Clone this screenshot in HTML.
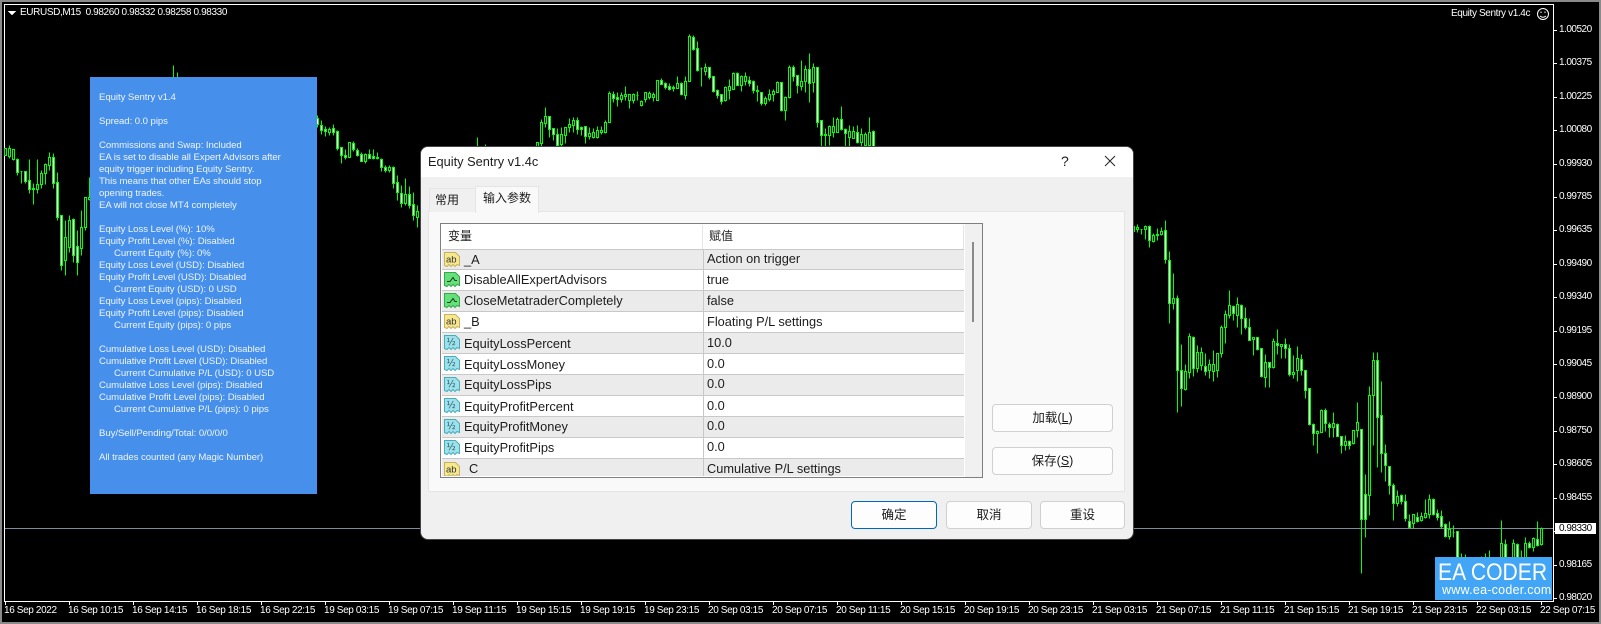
<!DOCTYPE html>
<html><head><meta charset="utf-8"><title>Equity Sentry</title>
<style>
html,body{margin:0;padding:0;background:#000}
#r{position:relative;width:1601px;height:624px;overflow:hidden;background:#000;font-family:"Liberation Sans","Noto Sans CJK SC",sans-serif}
#r div,#r svg{position:absolute}
.m{color:#fff;font-size:10px;line-height:12px;white-space:pre;letter-spacing:-.37px}
.p{color:#fff;font-size:10px;line-height:12px;white-space:pre;letter-spacing:-.5px;left:1559px}
.x{color:#fff;font-size:10px;line-height:12px;white-space:pre;letter-spacing:-.37px;top:605px}
.l{left:99px;color:#eef4fd;font-size:9.6px;line-height:12px;white-space:pre;letter-spacing:-.06px}
.u{color:#1c1c1c;font-size:12.8px;line-height:16px;white-space:pre}
.row{left:442px;width:522px;height:20px;border-bottom:1px solid #c8c8c8;overflow:hidden}
.g{background:#ebebeb}.wh{background:#fff}
.btn{background:#fdfdfd;border:1px solid #d0d0d0;border-radius:4px;box-sizing:border-box;text-align:center;color:#1c1c1c;font-size:12.5px;line-height:26px}
.n{left:22px;top:2px}.v{left:265px;top:2px}
.i{left:2px;top:2px}
</style></head><body><div id="r">

<div style="left:0;top:0;width:1601px;height:2px;background:#8a8a8a"></div>
<div style="left:0;top:0;width:2px;height:624px;background:#8a8a8a"></div>
<div style="left:0;top:622px;width:1601px;height:2px;background:#8a8a8a"></div>
<div style="left:1599px;top:0;width:2px;height:624px;background:#8a8a8a"></div>
<div style="left:4px;top:4px;width:1550px;height:1px;background:#fff"></div>
<div style="left:4px;top:4px;width:1px;height:598px;background:#fff"></div>
<div style="left:4px;top:601px;width:1550px;height:1px;background:#fff"></div>
<div style="left:1553px;top:4px;width:1px;height:598px;background:#fff"></div>
<div style="left:5px;top:528px;width:1548px;height:1px;background:#7f8c9c"></div>

<svg width="1601" height="624" style="left:0;top:0">
<g transform="translate(.5 .5)" fill="none" stroke="#00ff00" stroke-width="1" shape-rendering="crispEdges">
<path d="M5 148V155M9 145V158M13 149V160M17 158V175M21 171V183M25 171V183M29 159V193M33 183V204M37 159V193M41 170V188M45 163V184M49 152V170M53 153V188M57 172V220M61 215V270M65 220V275M69 215V252M73 218V262M77 230V275M81 210V255M85 197V230M89 177V200M173 65V77M177 72V77
M317 115V127M321 120V134M325 126V136M329 127V135M333 124V135M337 130V150M341 147V163M345 149V159M349 142V157M353 141V151M357 148V156M361 152V161M365 153V163M369 149V158M373 149V159M377 152V159M381 158V171M385 165V172M389 165V172M393 166V188M397 175V200M401 185V207M405 178V205M409 186V208M413 192V220M417 205V227
M477 137V148M481 146V148M485 144V148M537 142V148M541 119V148M545 107V127M549 116V137M553 128V140M557 128V148M561 127V146M565 127V143M569 118V132M573 117V132M577 117V134M581 126V135M585 126V143M589 127V139M593 128V138M597 126V138M601 126V134M605 120V133M609 91V122M613 91V102M617 92V106M621 92V102M625 86V100M629 94V108M633 93V103M637 91V100M641 100V106M645 92V102M649 91V99M653 92V101M657 80V100M661 78V84M665 82V89M669 83V90M673 85V91M677 76V88M681 82V95M685 76V99M689 34V81M693 35V50M697 41V71M701 67V86M705 63V75M709 67V79M713 76V92M717 89V98M721 94V104M725 86V101M729 79V99M733 72V89M737 72V85M741 75V91M745 72V85M749 76V86M753 80V93M757 85V101M761 92V105M765 96V105M769 89V101M773 89V101M777 81V92M781 82V111M785 96V120M789 65V98M793 65V81M797 75V93M801 60V90M805 65V92M809 53V102M813 63V92M817 67V127M821 120V148M825 128V148M829 125V145M833 117V137M837 117V132M841 106V130M845 128V148M849 125V148M853 126V137M857 125V143M861 128V148M865 132V148M869 117V148M873 130V148
M1133 224V232M1137 224V232M1141 229V234M1145 225V239M1149 225V247M1153 233V242M1157 228V240M1161 227V235M1165 220V263M1169 251V323M1173 273V309M1177 295V412M1181 344V406M1185 364V390M1189 333V378M1193 336V376M1197 345V372M1201 347V370M1205 353V375M1209 359V378M1213 350V381M1217 356V377M1221 325V357M1225 310V343M1229 290V318M1233 305V320M1237 297V327M1241 304V334M1245 307V329M1249 318V340M1253 337V355M1257 337V350M1261 348V377M1265 354V387M1269 362V387M1273 338V368M1277 329V354M1281 344V358M1285 338V358M1289 344V376M1293 355V378M1297 346V381M1301 354V375M1305 370V398M1309 388V425M1313 423V445M1317 430V453M1321 409V432M1325 408V431M1329 422V437M1333 412V437M1337 423V436M1341 436V453M1345 435V450M1349 440V449M1353 430V444M1357 402V437M1361 429V573M1365 474V537M1369 386V515M1373 352V445M1377 352V467M1381 381V472M1385 444V481M1389 466V494M1393 483V520M1397 490V506M1401 494V504M1405 494V521M1409 514V528M1413 514V528M1417 512V522M1421 512V521M1425 499V518M1429 494V518M1433 498V515M1437 509V520M1441 510V528M1445 523V537M1449 521V539M1453 525V537M1457 531V570M1461 553V560M1465 554V560M1481 556V560M1485 553V560M1489 550V560M1501 520V560M1505 539V560M1513 539V560M1517 543V560M1521 550V560M1525 537V560M1529 541V548M1533 537V551M1537 521V546M1541 527V545"/>
<path fill="#000" d="M4 148h2V155h-2zM8 148h2V156h-2zM12 149h2V159h-2zM20 171h2V171h-2zM32 188h2V189h-2zM36 184h2V189h-2zM40 173h2V184h-2zM44 164h2V173h-2zM48 157h2V165h-2zM64 237h2V260h-2zM68 220h2V247h-2zM80 227h2V248h-2zM84 197h2V227h-2zM88 197h2V199h-2z
M328 129h2V132h-2zM348 142h2V157h-2zM364 154h2V161h-2zM376 157h2V158h-2zM388 167h2V170h-2zM404 194h2V203h-2zM416 211h2V217h-2z
M536 142h2V150h-2zM540 122h2V143h-2zM544 116h2V123h-2zM560 134h2V144h-2zM564 127h2V135h-2zM568 124h2V127h-2zM572 120h2V125h-2zM588 133h2V136h-2zM592 132h2V137h-2zM596 130h2V137h-2zM600 130h2V132h-2zM604 122h2V132h-2zM608 93h2V122h-2zM620 95h2V99h-2zM624 94h2V96h-2zM628 94h2V100h-2zM632 94h2V100h-2zM636 95h2V95h-2zM640 101h2V105h-2zM644 92h2V99h-2zM648 93h2V97h-2zM652 94h2V97h-2zM656 80h2V100h-2zM676 83h2V88h-2zM684 81h2V95h-2zM688 36h2V81h-2zM700 68h2V68h-2zM704 67h2V71h-2zM724 87h2V100h-2zM728 86h2V90h-2zM732 73h2V89h-2zM740 76h2V85h-2zM744 76h2V81h-2zM756 90h2V91h-2zM764 98h2V103h-2zM768 94h2V99h-2zM772 91h2V94h-2zM776 82h2V92h-2zM784 97h2V110h-2zM788 67h2V97h-2zM800 81h2V86h-2zM804 69h2V81h-2zM812 67h2V82h-2zM824 134h2V135h-2zM828 126h2V135h-2zM832 126h2V132h-2zM836 119h2V132h-2zM848 131h2V137h-2zM852 131h2V138h-2zM860 134h2V142h-2zM864 134h2V145h-2zM868 132h2V145h-2z
M1132 226h2V231h-2zM1136 227h2V229h-2zM1140 229h2V229h-2zM1144 226h2V229h-2zM1152 235h2V241h-2zM1156 234h2V235h-2zM1160 231h2V234h-2zM1172 298h2V303h-2zM1184 371h2V389h-2zM1188 336h2V372h-2zM1196 352h2V368h-2zM1200 352h2V365h-2zM1208 364h2V370h-2zM1212 364h2V371h-2zM1216 353h2V370h-2zM1220 327h2V353h-2zM1224 314h2V327h-2zM1228 305h2V315h-2zM1236 304h2V315h-2zM1252 337h2V339h-2zM1264 362h2V377h-2zM1272 341h2V367h-2zM1280 344h2V346h-2zM1292 372h2V374h-2zM1296 358h2V370h-2zM1316 431h2V433h-2zM1320 410h2V432h-2zM1332 423h2V427h-2zM1344 441h2V445h-2zM1352 430h2V443h-2zM1356 422h2V430h-2zM1368 395h2V495h-2zM1372 360h2V395h-2zM1396 496h2V503h-2zM1412 514h2V523h-2zM1420 516h2V520h-2zM1424 513h2V517h-2zM1428 499h2V514h-2zM1448 529h2V536h-2zM1452 532h2V532h-2zM1500 543h2V560h-2zM1512 543h2V560h-2zM1524 543h2V560h-2zM1532 538h2V547h-2zM1540 528h2V544h-2z"/>
<path fill="#fff" d="M16 159h2V172h-2zM24 171h2V181h-2zM28 180h2V189h-2zM52 157h2V183h-2zM56 182h2V217h-2zM60 215h2V265h-2zM72 219h2V255h-2zM76 246h2V262h-2z
M316 118h2V124h-2zM320 125h2V130h-2zM324 129h2V131h-2zM332 128h2V132h-2zM336 131h2V148h-2zM340 147h2V155h-2zM344 155h2V157h-2zM352 143h2V149h-2zM356 150h2V155h-2zM360 154h2V161h-2zM368 154h2V158h-2zM372 156h2V158h-2zM380 159h2V167h-2zM384 167h2V170h-2zM392 167h2V183h-2zM396 182h2V192h-2zM400 193h2V203h-2zM408 194h2V205h-2zM412 204h2V215h-2z
M548 116h2V129h-2zM552 128h2V134h-2zM556 134h2V145h-2zM576 120h2V129h-2zM580 127h2V129h-2zM584 126h2V136h-2zM612 94h2V98h-2zM616 97h2V99h-2zM660 80h2V84h-2zM664 83h2V87h-2zM668 86h2V89h-2zM672 87h2V88h-2zM680 83h2V94h-2zM692 37h2V49h-2zM696 48h2V70h-2zM708 67h2V77h-2zM712 76h2V91h-2zM716 90h2V95h-2zM720 94h2V101h-2zM736 73h2V85h-2zM748 80h2V83h-2zM752 81h2V90h-2zM760 92h2V103h-2zM780 82h2V110h-2zM792 67h2V76h-2zM796 75h2V85h-2zM808 69h2V83h-2zM816 67h2V122h-2zM820 120h2V135h-2zM840 119h2V129h-2zM844 129h2V133h-2zM856 132h2V142h-2zM872 131h2V148h-2z
M1148 226h2V240h-2zM1164 230h2V259h-2zM1168 260h2V303h-2zM1176 298h2V370h-2zM1180 370h2V388h-2zM1192 337h2V368h-2zM1204 366h2V371h-2zM1232 306h2V313h-2zM1240 305h2V318h-2zM1244 318h2V327h-2zM1248 327h2V340h-2zM1256 337h2V349h-2zM1260 348h2V376h-2zM1268 362h2V367h-2zM1276 343h2V345h-2zM1284 344h2V348h-2zM1288 348h2V374h-2zM1300 359h2V370h-2zM1304 370h2V390h-2zM1308 388h2V424h-2zM1312 424h2V433h-2zM1324 410h2V423h-2zM1328 424h2V427h-2zM1336 424h2V436h-2zM1340 436h2V445h-2zM1348 441h2V445h-2zM1360 429h2V519h-2zM1364 494h2V519h-2zM1376 360h2V417h-2zM1380 415h2V453h-2zM1384 453h2V465h-2zM1388 466h2V485h-2zM1392 485h2V503h-2zM1400 495h2V501h-2zM1404 501h2V518h-2zM1408 521h2V527h-2zM1416 517h2V521h-2zM1432 499h2V514h-2zM1436 513h2V517h-2zM1440 516h2V526h-2zM1444 524h2V536h-2zM1456 531h2V570h-2zM1504 544h2V560h-2zM1516 544h2V560h-2zM1528 543h2V547h-2zM1536 539h2V545h-2z"/>
</g>
<g fill="#fff" shape-rendering="crispEdges">
<path d="M8 11h8l-4 4.5z"/>
<path d="M1554 30h3v1h-3zM1554 63h3v1h-3zM1554 97h3v1h-3zM1554 130h3v1h-3zM1554 164h3v1h-3zM1554 197h3v1h-3zM1554 230h3v1h-3zM1554 264h3v1h-3zM1554 297h3v1h-3zM1554 331h3v1h-3zM1554 364h3v1h-3zM1554 397h3v1h-3zM1554 431h3v1h-3zM1554 464h3v1h-3zM1554 498h3v1h-3zM1554 531h3v1h-3zM1554 565h3v1h-3zM1554 598h3v1h-3z"/>
<path d="M5 602h1v3h-1zM69 602h1v3h-1zM133 602h1v3h-1zM197 602h1v3h-1zM261 602h1v3h-1zM325 602h1v3h-1zM389 602h1v3h-1zM453 602h1v3h-1zM517 602h1v3h-1zM581 602h1v3h-1zM645 602h1v3h-1zM709 602h1v3h-1zM773 602h1v3h-1zM837 602h1v3h-1zM901 602h1v3h-1zM965 602h1v3h-1zM1029 602h1v3h-1zM1093 602h1v3h-1zM1157 602h1v3h-1zM1221 602h1v3h-1zM1285 602h1v3h-1zM1349 602h1v3h-1zM1413 602h1v3h-1zM1477 602h1v3h-1zM1541 602h1v3h-1z"/>
</g>
<g fill="none" stroke="#fff" stroke-width="1">
<circle cx="1543" cy="14" r="5.5"/>
<path d="M1540 16q3 2.5 6 0"/>
<path d="M1541 11.500v1.500M1545 11.500v1.500"/>
</g>
</svg>

<div class="m" style="left:20px;top:7px">EURUSD,M15  0.98260 0.98332 0.98258 0.98330</div>
<div class="m" style="left:1451px;top:8px">Equity Sentry v1.4c</div>

<div class="p" style="top:24px">1.00520</div><div class="p" style="top:57px">1.00375</div><div class="p" style="top:91px">1.00225</div><div class="p" style="top:124px">1.00080</div><div class="p" style="top:158px">0.99930</div><div class="p" style="top:191px">0.99785</div><div class="p" style="top:224px">0.99635</div><div class="p" style="top:258px">0.99490</div><div class="p" style="top:291px">0.99340</div><div class="p" style="top:325px">0.99195</div><div class="p" style="top:358px">0.99045</div><div class="p" style="top:391px">0.98900</div><div class="p" style="top:425px">0.98750</div><div class="p" style="top:458px">0.98605</div><div class="p" style="top:492px">0.98455</div><div class="p" style="top:525px">0.98310</div><div class="p" style="top:559px">0.98165</div><div class="p" style="top:592px">0.98020</div>
<div style="left:1555px;top:523px;width:41px;height:11px;background:#fff"></div>
<div class="p" style="top:523px;color:#000">0.98330</div>

<div class="x" style="left:4px">16 Sep 2022</div><div class="x" style="left:68px">16 Sep 10:15</div><div class="x" style="left:132px">16 Sep 14:15</div><div class="x" style="left:196px">16 Sep 18:15</div><div class="x" style="left:260px">16 Sep 22:15</div><div class="x" style="left:324px">19 Sep 03:15</div><div class="x" style="left:388px">19 Sep 07:15</div><div class="x" style="left:452px">19 Sep 11:15</div><div class="x" style="left:516px">19 Sep 15:15</div><div class="x" style="left:580px">19 Sep 19:15</div><div class="x" style="left:644px">19 Sep 23:15</div><div class="x" style="left:708px">20 Sep 03:15</div><div class="x" style="left:772px">20 Sep 07:15</div><div class="x" style="left:836px">20 Sep 11:15</div><div class="x" style="left:900px">20 Sep 15:15</div><div class="x" style="left:964px">20 Sep 19:15</div><div class="x" style="left:1028px">20 Sep 23:15</div><div class="x" style="left:1092px">21 Sep 03:15</div><div class="x" style="left:1156px">21 Sep 07:15</div><div class="x" style="left:1220px">21 Sep 11:15</div><div class="x" style="left:1284px">21 Sep 15:15</div><div class="x" style="left:1348px">21 Sep 19:15</div><div class="x" style="left:1412px">21 Sep 23:15</div><div class="x" style="left:1476px">22 Sep 03:15</div><div class="x" style="left:1540px">22 Sep 07:15</div>

<div style="left:90px;top:77px;width:227px;height:417px;background:#4690ec"></div>
<div class="l" style="top:92px">Equity Sentry v1.4</div>
<div class="l" style="top:116px">Spread: 0.0 pips</div>
<div class="l" style="top:140px">Commissions and Swap: Included</div>
<div class="l" style="top:152px">EA is set to disable all Expert Advisors after</div>
<div class="l" style="top:164px">equity trigger including Equity Sentry.</div>
<div class="l" style="top:176px">This means that other EAs should stop</div>
<div class="l" style="top:188px">opening trades.</div>
<div class="l" style="top:200px">EA will not close MT4 completely</div>
<div class="l" style="top:224px">Equity Loss Level (%): 10%</div>
<div class="l" style="top:236px">Equity Profit Level (%): Disabled</div>
<div class="l" style="top:248px;left:114px">Current Equity (%): 0%</div>
<div class="l" style="top:260px">Equity Loss Level (USD): Disabled</div>
<div class="l" style="top:272px">Equity Profit Level (USD): Disabled</div>
<div class="l" style="top:284px;left:114px">Current Equity (USD): 0 USD</div>
<div class="l" style="top:296px">Equity Loss Level (pips): Disabled</div>
<div class="l" style="top:308px">Equity Profit Level (pips): Disabled</div>
<div class="l" style="top:320px;left:114px">Current Equity (pips): 0 pips</div>
<div class="l" style="top:344px">Cumulative Loss Level (USD): Disabled</div>
<div class="l" style="top:356px">Cumulative Profit Level (USD): Disabled</div>
<div class="l" style="top:368px;left:114px">Current Cumulative P/L (USD): 0 USD</div>
<div class="l" style="top:380px">Cumulative Loss Level (pips): Disabled</div>
<div class="l" style="top:392px">Cumulative Profit Level (pips): Disabled</div>
<div class="l" style="top:404px;left:114px">Current Cumulative P/L (pips): 0 pips</div>
<div class="l" style="top:428px">Buy/Sell/Pending/Total: 0/0/0/0</div>
<div class="l" style="top:452px">All trades counted (any Magic Number)</div>

<div style="left:1435px;top:557px;width:117px;height:43px;background:#42a5f5"></div>
<div style="left:1438px;top:560px;color:#fff;font-size:24px;line-height:26px;white-space:pre;transform:scaleX(.88);transform-origin:left top">EA CODER</div>
<div style="left:1442px;top:583px;color:#fff;font-size:12.5px;line-height:14px;white-space:pre;letter-spacing:.25px">www.ea-coder.com</div>

<div style="left:420px;top:146px;width:714px;height:394px;background:#f0f0f0;border-radius:8px;box-sizing:border-box;border:1px solid #444;overflow:hidden"></div>
<div style="left:421px;top:147px;width:712px;height:30px;background:#fff;border-radius:7px 7px 0 0"></div>
<div class="u" style="left:428px;top:154px">Equity Sentry v1.4c</div>
<div class="u" style="left:1061px;top:153px;font-size:14px">?</div>
<svg width="12" height="12" style="left:1104px;top:155px"><path d="M1 1L11 11M11 1L1 11" stroke="#222" stroke-width="1" fill="none"/></svg>

<div style="left:428px;top:211px;width:697px;height:281px;background:#f9f9f9;border:1px solid #e5e5e5;box-sizing:border-box"></div>
<div style="left:429px;top:188px;width:47px;height:24px;background:#f0f0f0;border:1px solid #e5e5e5;border-bottom:none;box-sizing:border-box"></div>
<div class="u" style="left:435px;top:192px;font-size:12px">常用</div>
<div style="left:475px;top:186px;width:64px;height:27px;background:#f9f9f9;border:1px solid #e5e5e5;border-bottom:none;box-sizing:border-box"></div>
<div class="u" style="left:483px;top:190px;font-size:12px">输入参数</div>

<div style="left:440px;top:223px;width:543px;height:255px;background:#fff;border:1px solid #7f7f7f;box-sizing:border-box"></div>
<div style="left:965px;top:224px;width:17px;height:253px;background:#f0f0f0"></div>
<div style="left:972px;top:242px;width:2px;height:80px;background:#8a8a8a"></div>
<div class="u" style="left:448px;top:228px;font-size:12px">变量</div>
<div class="u" style="left:709px;top:228px;font-size:12px">赋值</div>
<div style="left:702px;top:225px;width:1px;height:24px;background:#e5e5e5"></div>
<div style="left:963px;top:225px;width:1px;height:24px;background:#e5e5e5"></div>
<div style="left:442px;top:249px;width:522px;height:1px;background:#c8c8c8"></div>

<div class="row g" style="top:250px;height:19px"><svg class="i" width="16" height="16"><path d="M.5 .5H11.5L15.5 4.5V13.5L13 12.5L11 14.5L9 12.5L7 14.5L5 12.5L3 14.5L.5 13.5Z" fill="#f5e88f" stroke="#c9b060"/><text x="2" y="10.500" font-size="9.500" fill="#333" font-family="Liberation Sans">ab</text></svg><div class="u n">_A</div><div class="u v" style="top:1px">Action on trigger</div></div>
<div class="row wh" style="top:270px"><svg class="i" width="16" height="16"><path d="M.5 .5H11.500L15.500 4.500V13.500L13 12.500L11 14.500L9 12.500L7 14.500L5 12.500L3 14.500L.5 13.500Z" fill="#66e07a" stroke="#35a84c"/><path d="M3 9.500H6L9 5.500L11 8.500H13" fill="none" stroke="#123f1c"/></svg><div class="u n">DisableAllExpertAdvisors</div><div class="u v">true</div></div>
<div class="row g" style="top:291px"><svg class="i" width="16" height="16"><path d="M.5 .5H11.500L15.500 4.500V13.500L13 12.500L11 14.500L9 12.500L7 14.500L5 12.500L3 14.500L.5 13.500Z" fill="#66e07a" stroke="#35a84c"/><path d="M3 9.500H6L9 5.500L11 8.500H13" fill="none" stroke="#123f1c"/></svg><div class="u n">CloseMetatraderCompletely</div><div class="u v">false</div></div>
<div class="row wh" style="top:312px"><svg class="i" width="16" height="16"><path d="M.5 .5H11.500L15.500 4.500V13.500L13 12.500L11 14.500L9 12.500L7 14.500L5 12.500L3 14.500L.5 13.500Z" fill="#f5e88f" stroke="#c9b060"/><text x="2" y="10.500" font-size="9.500" fill="#333" font-family="Liberation Sans">ab</text></svg><div class="u n">_B</div><div class="u v">Floating P/L settings</div></div>
<div class="row g" style="top:333px"><svg class="i" width="16" height="16"><path d="M.5 .5H11.500L15.500 4.500V13.500L13 12.500L11 14.500L9 12.500L7 14.500L5 12.500L3 14.500L.5 13.500Z" fill="#a0e0ea" stroke="#45aebd"/><text x="2.500" y="10" font-size="9.500" fill="#1f5f6c" font-family="DejaVu Sans">½</text></svg><div class="u n" style="top:3px">EquityLossPercent</div><div class="u v">10.0</div></div>
<div class="row wh" style="top:354px"><svg class="i" width="16" height="16"><path d="M.5 .5H11.500L15.500 4.500V13.500L13 12.500L11 14.500L9 12.500L7 14.500L5 12.500L3 14.500L.5 13.500Z" fill="#a0e0ea" stroke="#45aebd"/><text x="2.500" y="10" font-size="9.500" fill="#1f5f6c" font-family="DejaVu Sans">½</text></svg><div class="u n" style="top:3px">EquityLossMoney</div><div class="u v">0.0</div></div>
<div class="row g" style="top:375px"><svg class="i" width="16" height="16"><path d="M.5 .5H11.500L15.500 4.500V13.500L13 12.500L11 14.500L9 12.500L7 14.500L5 12.500L3 14.500L.5 13.500Z" fill="#a0e0ea" stroke="#45aebd"/><text x="2.500" y="10" font-size="9.500" fill="#1f5f6c" font-family="DejaVu Sans">½</text></svg><div class="u n">EquityLossPips</div><div class="u v" style="top:1px">0.0</div></div>
<div class="row wh" style="top:396px"><svg class="i" width="16" height="16"><path d="M.5 .5H11.500L15.500 4.500V13.500L13 12.500L11 14.500L9 12.500L7 14.500L5 12.500L3 14.500L.5 13.500Z" fill="#a0e0ea" stroke="#45aebd"/><text x="2.500" y="10" font-size="9.500" fill="#1f5f6c" font-family="DejaVu Sans">½</text></svg><div class="u n" style="top:3px">EquityProfitPercent</div><div class="u v">0.0</div></div>
<div class="row g" style="top:417px"><svg class="i" width="16" height="16"><path d="M.5 .5H11.500L15.500 4.500V13.500L13 12.500L11 14.500L9 12.500L7 14.500L5 12.500L3 14.500L.5 13.500Z" fill="#a0e0ea" stroke="#45aebd"/><text x="2.500" y="10" font-size="9.500" fill="#1f5f6c" font-family="DejaVu Sans">½</text></svg><div class="u n">EquityProfitMoney</div><div class="u v" style="top:1px">0.0</div></div>
<div class="row wh" style="top:438px"><svg class="i" width="16" height="16"><path d="M.5 .5H11.500L15.500 4.500V13.500L13 12.500L11 14.500L9 12.500L7 14.500L5 12.500L3 14.500L.5 13.500Z" fill="#a0e0ea" stroke="#45aebd"/><text x="2.500" y="10" font-size="9.500" fill="#1f5f6c" font-family="DejaVu Sans">½</text></svg><div class="u n">EquityProfitPips</div><div class="u v" style="top:1px">0.0</div></div>
<div class="g" style="left:442px;top:459px;width:522px;height:17px;overflow:hidden"><svg class="i" style="top:3px" width="16" height="16"><path d="M.5 .5H11.500L15.500 4.500V13.500L13 12.500L11 14.500L9 12.500L7 14.500L5 12.500L3 14.500L.5 13.500Z" fill="#f5e88f" stroke="#c9b060"/><text x="2" y="10.500" font-size="9.500" fill="#333" font-family="Liberation Sans">ab</text></svg><div class="u" style="left:27px;top:2px">C</div><div class="u v" style="top:2px">Cumulative P/L settings</div></div>
<div style="left:703px;top:250px;width:1px;height:226px;background:#c8c8c8"></div>

<div class="btn" style="left:992px;top:404px;width:121px;height:28px">加载(<u>L</u>)</div>
<div class="btn" style="left:992px;top:447px;width:121px;height:28px">保存(<u>S</u>)</div>
<div class="btn" style="left:851px;top:501px;width:86px;height:28px;border-color:#0067c0">确定</div>
<div class="btn" style="left:946px;top:501px;width:86px;height:28px">取消</div>
<div class="btn" style="left:1040px;top:501px;width:85px;height:28px">重设</div>
</div></body></html>
